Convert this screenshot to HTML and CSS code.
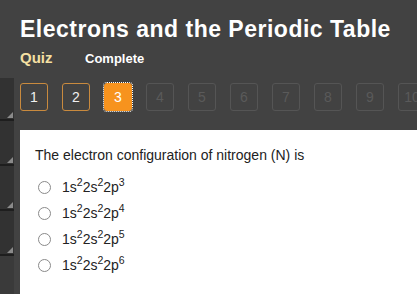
FILE: index.html
```html
<!DOCTYPE html>
<html>
<head>
<meta charset="utf-8">
<link rel="stylesheet" href="styles.css">
</head>
<body>
<div class="page">
  <header class="head">
    <h1 class="title">Electrons and the Periodic Table</h1>
    <div class="sub">
      <span class="quiz">Quiz</span>
      <span class="status">Complete</span>
    </div>
  </header>
  <div class="main">
    <aside class="side">
      <div class="panel"><span class="grip"></span></div>
      <div class="panel"><span class="grip"></span></div>
      <div class="panel"><span class="grip"></span></div>
      <div class="panel"><span class="grip"></span></div>
    </aside>
    <div class="content">
      <nav class="steps">
        <span class="step done">1</span>
        <span class="step done">2</span>
        <span class="step current">3</span>
        <span class="step">4</span>
        <span class="step">5</span>
        <span class="step">6</span>
        <span class="step">7</span>
        <span class="step">8</span>
        <span class="step">9</span>
        <span class="step">10</span>
      </nav>
      <section class="card">
        <p class="question">The electron configuration of nitrogen (N) is</p>
        <ul class="options">
          <li class="option"><span class="radio"></span><span>1s<sup>2</sup>2s<sup>2</sup>2p<sup>3</sup></span></li>
          <li class="option"><span class="radio"></span><span>1s<sup>2</sup>2s<sup>2</sup>2p<sup>4</sup></span></li>
          <li class="option"><span class="radio"></span><span>1s<sup>2</sup>2s<sup>2</sup>2p<sup>5</sup></span></li>
          <li class="option"><span class="radio"></span><span>1s<sup>2</sup>2s<sup>2</sup>2p<sup>6</sup></span></li>
        </ul>
      </section>
    </div>
  </div>
</div>
</body>
</html>
```
FILE: styles.css
```css
html, body {
  margin: 0;
  padding: 0;
  background: #424242;
  overflow: hidden;
}
.page {
  width: 417px;
  height: 294px;
  font-family: "Liberation Sans", Arial, sans-serif;
  display: flex;
  flex-direction: column;
}
.head {
  padding: 16px 0 0 20px;
  height: 63px;
  box-sizing: border-box;
}
.title {
  margin: 0;
  font-size: 23px;
  line-height: 27px;
  letter-spacing: 0.5px;
  font-weight: bold;
  color: #ffffff;
  white-space: nowrap;
}
.sub {
  display: flex;
  align-items: baseline;
  margin-top: 6px;
}
.quiz {
  color: #f5e0a3;
  font-weight: bold;
  font-size: 15px;
  width: 65px;
}
.status {
  color: #ffffff;
  font-weight: bold;
  font-size: 13px;
}
.main {
  flex: 1;
  display: flex;
}
.side {
  width: 14px;
  margin-top: 15px;
  background: #3a3a3a;
  display: flex;
  flex-direction: column;
}
.panel {
  height: 43px;
  background: #323232;
  border-bottom: 2px solid #1e1e1e;
  position: relative;
}
.panel:first-child {
  height: 41px;
}
.grip {
  position: absolute;
  right: 1px;
  bottom: 1px;
  width: 0;
  height: 0;
  border-left: 6px solid transparent;
  border-bottom: 6px solid #8a8a8a;
}
.content {
  flex: 1;
  margin-left: 6px;
  display: flex;
  flex-direction: column;
  min-width: 0;
}
.steps {
  display: flex;
  gap: 14px;
  padding-top: 20px;
  height: 67px;
  box-sizing: border-box;
  white-space: nowrap;
  overflow: hidden;
}
.step {
  flex: none;
  width: 26px;
  height: 26px;
  border: 1px solid #555555;
  border-radius: 3px;
  color: #5a5a5a;
  font-size: 14px;
  display: flex;
  align-items: center;
  justify-content: center;
}
.step.done {
  border-color: #c98a3e;
  color: #f0f0f0;
}
.step.current {
  background: #f7931e;
  border-color: #f7931e;
  color: #ffffff;
  outline: 1px dotted #ffffff;
  outline-offset: 0;
}
.card {
  flex: 1;
  background: #ffffff;
  padding: 17px 0 0 15px;
  color: #222222;
}
.question {
  margin: 0 0 10px 0;
  font-size: 14px;
  line-height: 17px;
}
.options {
  list-style: none;
  margin: 0;
  padding: 0 0 0 3px;
}
.option {
  display: flex;
  align-items: center;
  height: 26px;
  font-size: 14px;
}
.radio {
  width: 11px;
  height: 11px;
  border: 1px solid #8a8a8a;
  border-radius: 50%;
  margin-right: 11px;
  box-sizing: content-box;
}
sup {
  font-size: 10.5px;
  line-height: 0;
  vertical-align: 6px;
}
```
